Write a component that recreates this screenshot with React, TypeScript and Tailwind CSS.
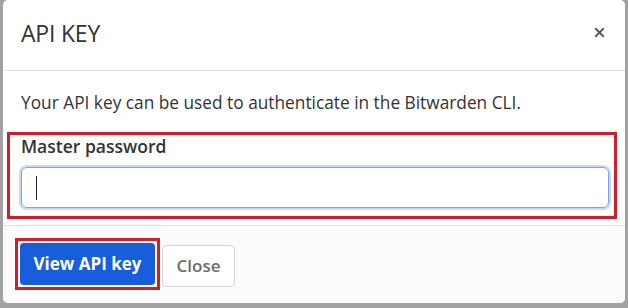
import { X } from 'lucide-react';

export default function App() {
  return (
    <div
      className="w-[628px] h-[308px] bg-[#a2a2a2] overflow-hidden pl-[3px]"
      style={{ fontFamily: '"Open Sans", "Noto Sans", sans-serif' }}
    >
      <div className="w-[622px] h-[303px] bg-white rounded-[5px] flex flex-col overflow-hidden">
        {/* Header */}
        <div className="h-[71px] flex-shrink-0 flex items-center justify-between pl-[18px] pr-[18px] border-b border-[#e3e3e3]">
          <h1 className="text-[23px] leading-none text-[#333] tracking-[-0.2px] mt-[-4px]">API KEY</h1>
          <X size={15} strokeWidth={3} className="text-[#5a5a5a] mt-[-6px]" />
        </div>

        {/* Body */}
        <div className="flex flex-col pt-[20px]">
          <p className="px-[18px] text-[17.3px] leading-[24px] text-[#333]">
            Your API key can be used to authenticate in the Bitwarden CLI.
          </p>
          <div className="ml-[4px] mt-[17px] w-[610px] h-[87px] border-[3px] border-[#cf1f2d] pl-[11px] pr-[5px]">
            <label className="block text-[17.5px] leading-[22px] font-semibold text-[#333]">Master password</label>
            <div className="mt-[10px] h-[41px] rounded-[6px] border border-[#7ea2ea] shadow-[0_0_0_2px_#c9d8f6] flex items-center pl-[14px]">
              <span className="w-px h-[24px] bg-[#222]" />
            </div>
          </div>
        </div>

        {/* Footer */}
        <div className="mt-[6px] flex-1 border-t border-[#e3e3e3] bg-[#fbfbfb] flex items-start gap-[2px] pl-[12px] pt-[12px]">
          <div className="border-[3px] border-[#cf1f2d] p-[2px]">
            <button className="w-[135px] h-[42px] rounded-[4px] bg-[#175ddc] text-white text-[17px] font-bold">
              View API key
            </button>
          </div>
          <button className="mt-[7px] w-[73px] h-[42px] rounded-[4px] border border-[#d4d4d4] bg-white text-[#6c6c6c] text-[17px] font-semibold">
            Close
          </button>
        </div>
      </div>
    </div>
  );
}
